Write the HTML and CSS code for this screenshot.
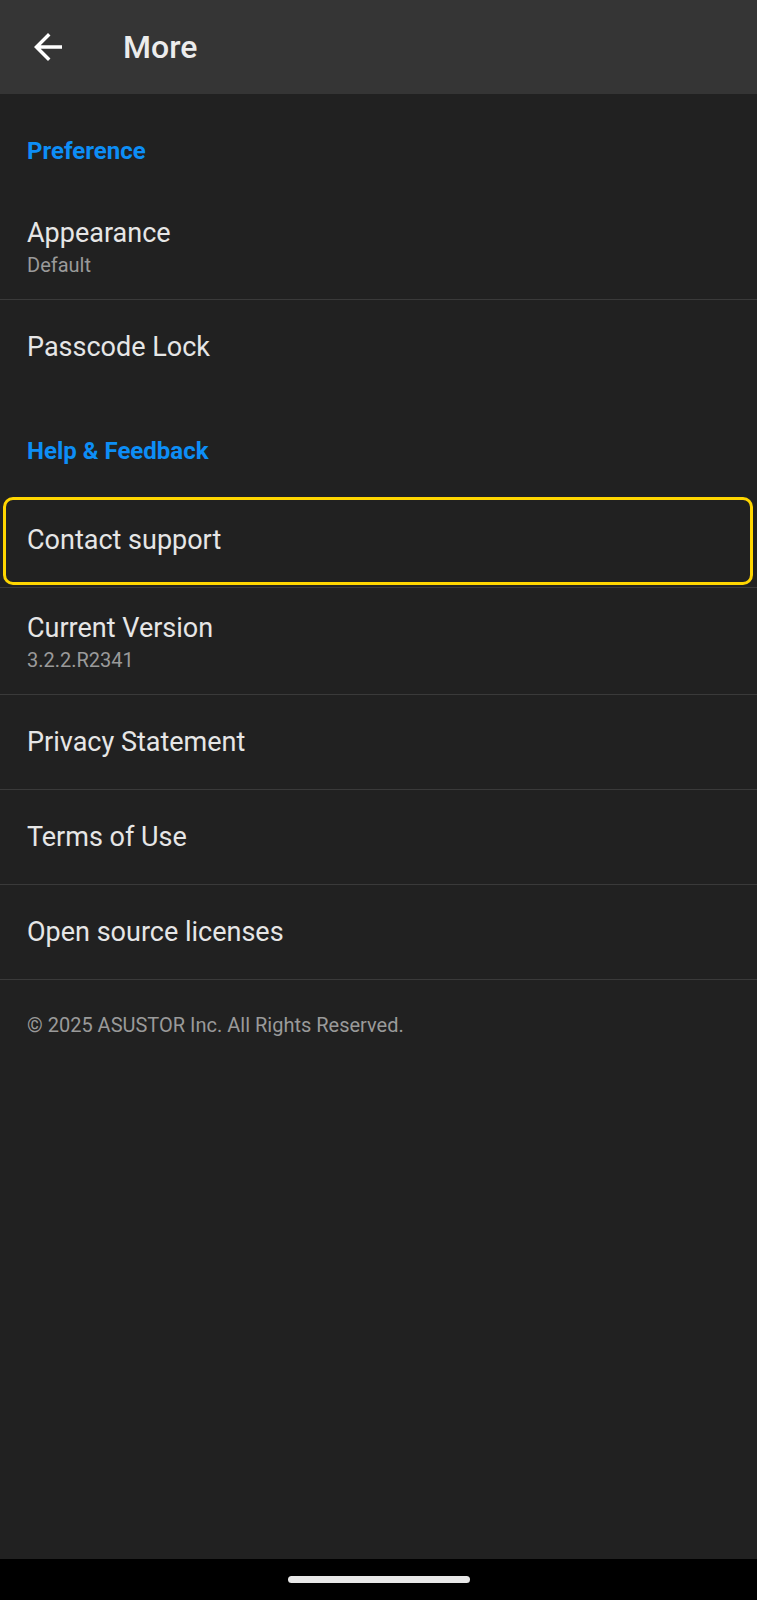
FILE: index.html
```html
<!DOCTYPE html>
<html lang="en">
<head>
  <meta charset="UTF-8">
  <meta name="viewport" content="width=device-width, initial-scale=1.0">
  <title>More</title>

  <link rel="stylesheet" href="styles.css">
</head>
<body>

  <div class="screen">
    <header class="app-bar">
      <button class="back-btn" aria-label="Back">
        <svg viewBox="0 0 24 24" width="42" height="42">
          <path d="M20 11H7.83l5.59-5.59L12 4l-8 8 8 8 1.41-1.41L7.83 13H20v-2z" fill="#ffffff"/>
        </svg>
      </button>
      <h1 class="title">More</h1>
    </header>

    <main class="content">
      <div class="section-header">Preference</div>

      <div class="item two-line divided">
        <div class="item-title">Appearance</div>
        <div class="item-sub">Default</div>
      </div>

      <div class="item">
        <div class="item-title">Passcode Lock</div>
      </div>

      <div class="section-header">Help &amp; Feedback</div>

      <div class="item divided focused">
        <div class="item-title">Contact support</div>
      </div>

      <div class="item two-line divided">
        <div class="item-title">Current Version</div>
        <div class="item-sub">3.2.2.R2341</div>
      </div>

      <div class="item divided">
        <div class="item-title">Privacy Statement</div>
      </div>

      <div class="item divided">
        <div class="item-title">Terms of Use</div>
      </div>

      <div class="item divided">
        <div class="item-title">Open source licenses</div>
      </div>

      <p class="copyright">&copy; 2025 ASUSTOR Inc. All Rights Reserved.</p>
    </main>

    <div class="nav-bar">
      <div class="home-pill"></div>
    </div>
  </div>

</body>
</html>
```

FILE: styles.css
```css
/* General Reset */
* {
  margin: 0;
  padding: 0;
  box-sizing: border-box;
}

body {
  font-family: Roboto, "Noto Sans", Arial, sans-serif;
  background-color: #212121;
  color: #e6e6e6;
}

.screen {
  display: flex;
  flex-direction: column;
  height: 1600px;
}

/* Top app bar */
.app-bar {
  display: flex;
  align-items: center;
  height: 94px;
  background-color: #353535;
}

.back-btn {
  display: flex;
  align-items: center;
  justify-content: center;
  width: 42px;
  height: 42px;
  margin-left: 27px;
  background: none;
  border: none;
}

.title {
  margin-left: 54px;
  font-size: 32px;
  font-weight: 500;
  color: #ececec;
}

/* List */
.content {
  flex: 1;
}

.section-header {
  padding: 43px 27px 28px;
  font-size: 24px;
  line-height: 28px;
  font-weight: 700;
  color: #0d8ef6;
}

.item {
  position: relative;
  display: flex;
  flex-direction: column;
  justify-content: center;
  height: 94px;
  padding: 0 27px;
}

.item.divided {
  height: 95px;
  border-bottom: 1px solid #3a3a3a;
}

.item.two-line {
  justify-content: flex-start;
  height: 107px;
  padding-top: 24px;
}

.item-title {
  font-size: 27px;
  line-height: 32px;
  color: #e6e6e6;
}

.item-sub {
  font-size: 20px;
  line-height: 33px;
  color: #9a9a9a;
}

/* keyboard focus ring */
.item.focused::after {
  content: "";
  position: absolute;
  top: 4px;
  left: 3px;
  right: 4px;
  bottom: 2px;
  border: 3px solid #ffd600;
  border-radius: 10px;
}

.copyright {
  padding: 31px 27px 0;
  font-size: 20px;
  line-height: 28px;
  color: #9a9a9a;
}

/* System navigation */
.nav-bar {
  display: flex;
  justify-content: center;
  align-items: center;
  height: 41px;
  background-color: #000;
}

.home-pill {
  width: 182px;
  height: 7px;
  border-radius: 4px;
  background-color: #e8e8e8;
}
```
